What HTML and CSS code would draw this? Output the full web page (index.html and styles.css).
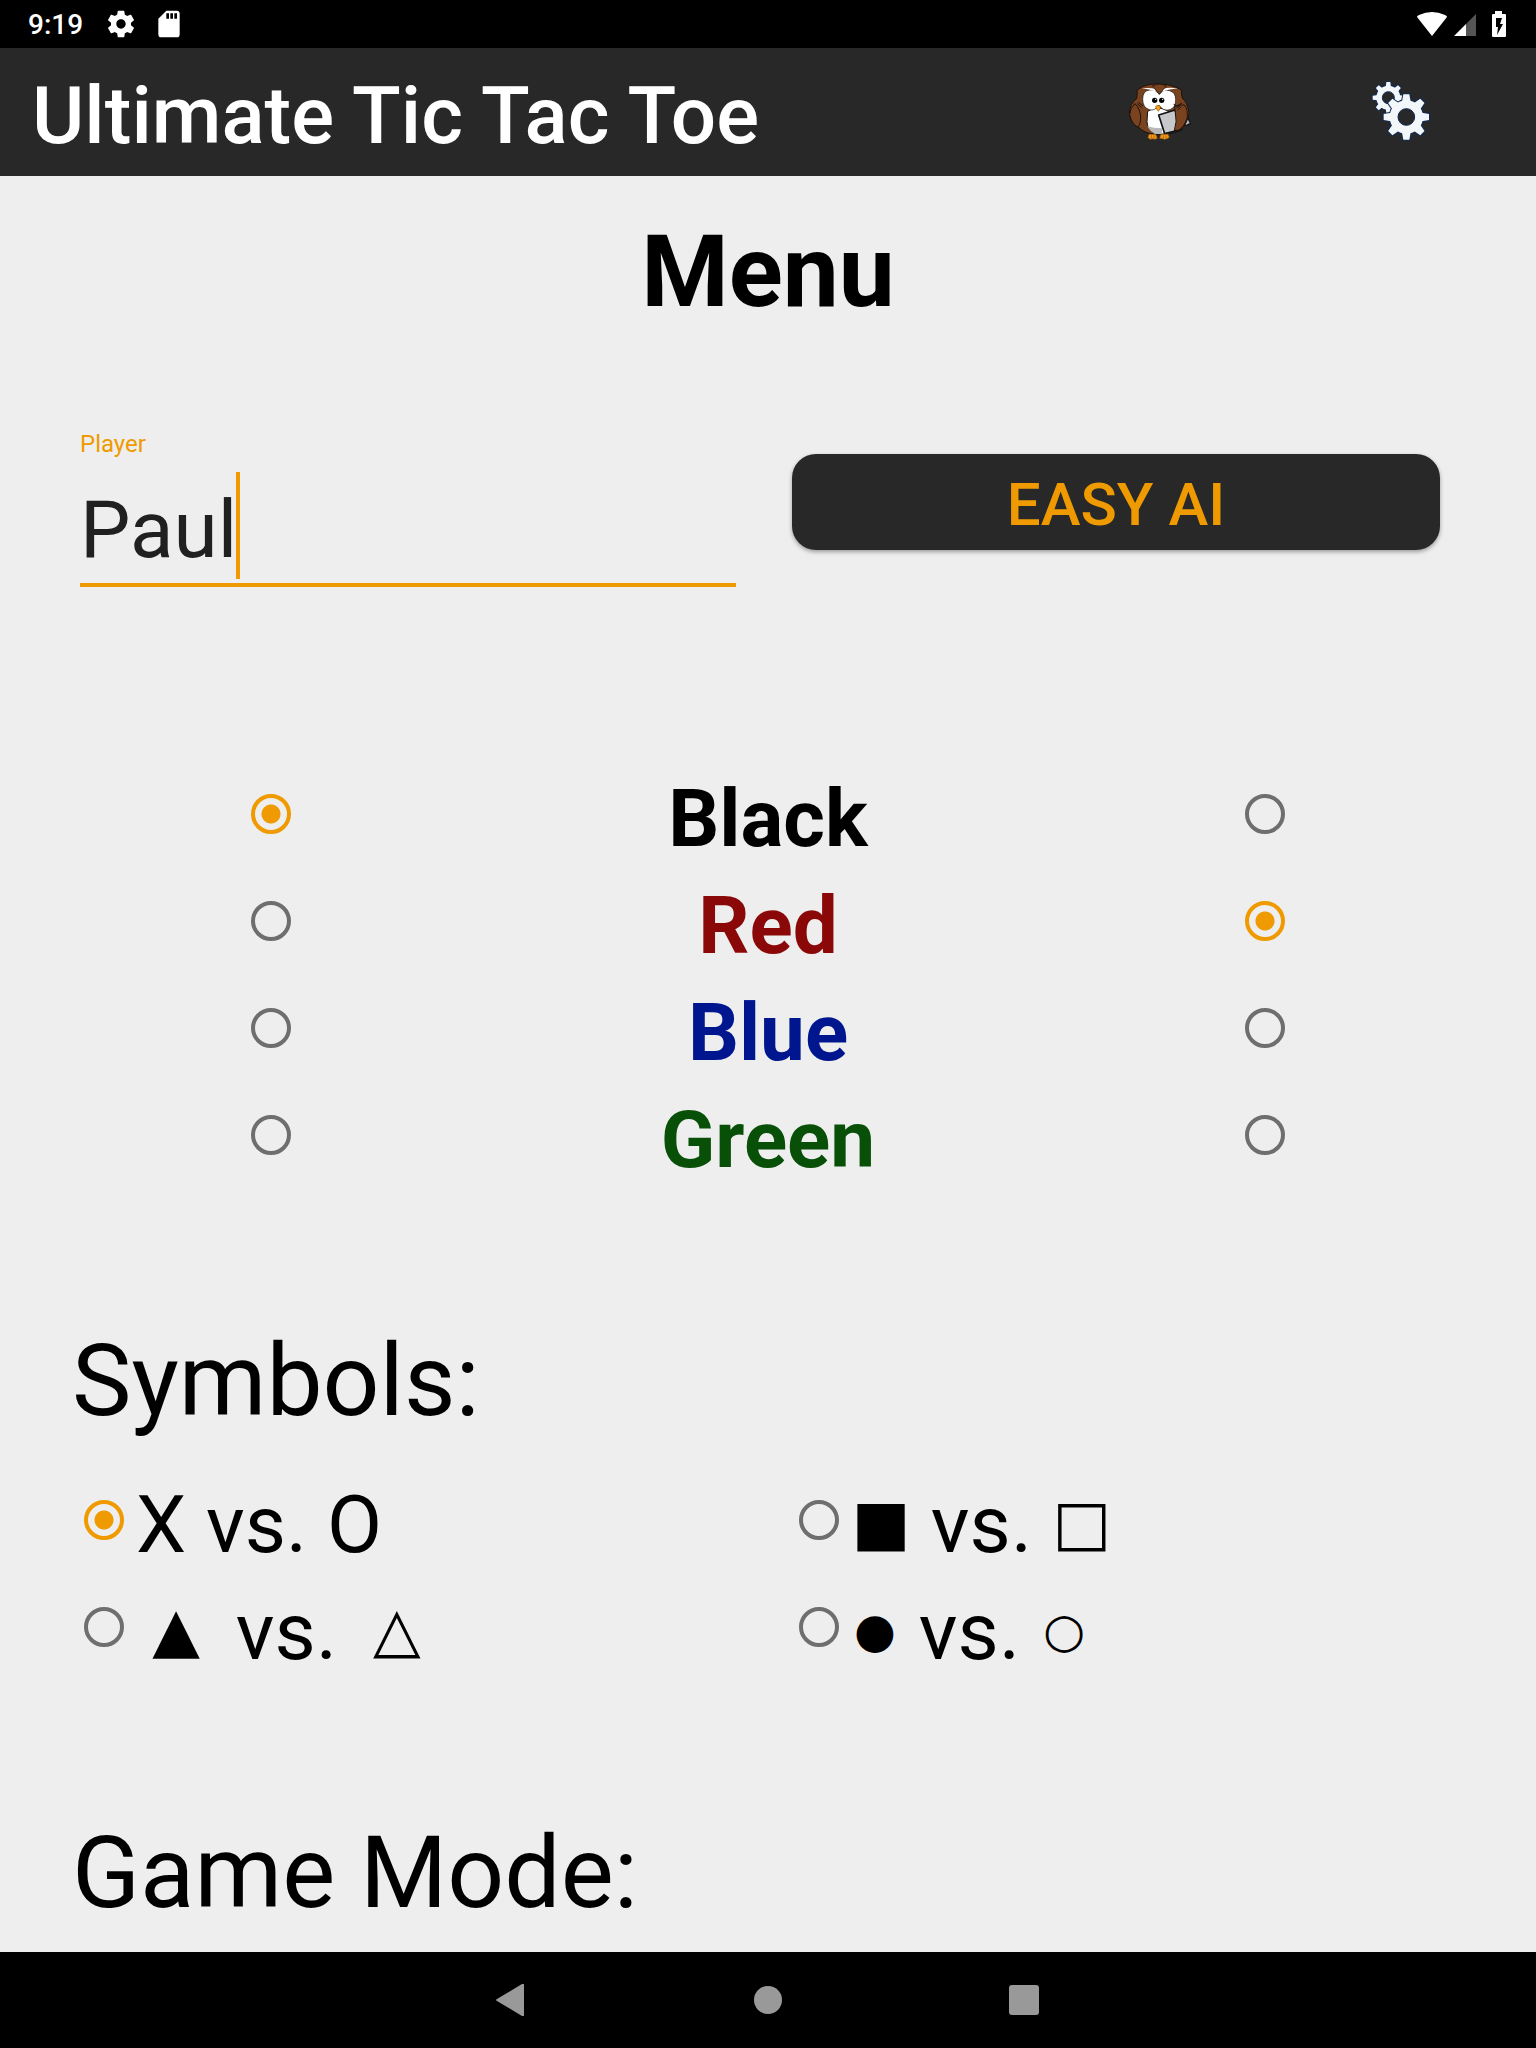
FILE: index.html
```html
<!DOCTYPE html>
<html lang="en">
<head>
<meta charset="utf-8">
<meta name="viewport" content="width=device-width, initial-scale=1">
<title>Ultimate Tic Tac Toe</title>
<link rel="stylesheet" href="styles.css">
</head>
<body>
<div class="status-bar">
  <div class="status-group">
    <time class="clock">9:19</time>
    <svg class="status-icon" viewBox="0 0 24 24" aria-hidden="true"><path fill="#fff" d="M19.43 12.98c.04-.32.07-.64.07-.98s-.03-.66-.07-.98l2.11-1.65c.19-.15.24-.42.12-.64l-2-3.46c-.12-.22-.39-.3-.61-.22l-2.49 1c-.52-.4-1.08-.73-1.69-.98l-.38-2.65C14.46 2.18 14.25 2 14 2h-4c-.25 0-.46.18-.49.42l-.38 2.65c-.61.25-1.17.59-1.69.98l-2.49-1c-.23-.09-.49 0-.61.22l-2 3.46c-.13.22-.07.49.12.64l2.11 1.65c-.04.32-.07.65-.07.98s.03.66.07.98l-2.11 1.65c-.19.15-.24.42-.12.64l2 3.46c.12.22.39.3.61.22l2.49-1c.52.4 1.08.73 1.69.98l.38 2.65c.03.24.24.42.49.42h4c.25 0 .46-.18.49-.42l.38-2.65c.61-.25 1.17-.59 1.69-.98l2.49 1c.23.09.49 0 .61-.22l2-3.46c.12-.22.07-.49-.12-.64l-2.11-1.65zM12 15.5c-1.93 0-3.5-1.57-3.5-3.5s1.57-3.5 3.5-3.5 3.5 1.57 3.5 3.5-1.57 3.5-3.5 3.5z"/></svg>
    <svg class="status-icon" viewBox="0 0 24 24" aria-hidden="true"><path fill="#fff" d="M18 2h-8L4 8v12c0 1.100.9 2 2 2h12c1.100 0 2-.9 2-2V4c0-1.100-.9-2-2-2zm-6 6h-2V4h2v4zm3 0h-2V4h2v4zm3 0h-2V4h2v4z"/></svg>
  </div>
  <svg class="signals" viewBox="0 0 92 28" aria-hidden="true">
    <path fill="#fff" d="M16 26 1 7Q1 6 3 5Q16-1 29 5Q31 6 31 7Z"/>
    <path fill="#fff" d="M38 26 50 14V26Z"/>
    <path fill="#555" d="M50 14 60 4V26H50Z"/>
    <path fill="#fff" d="M79 1h7v3h3q1 0 1 1v21q0 1-1 1H77q-1 0-1-1V5q0-1 1-1h2Z"/>
    <path fill="#000" d="M80 8h6l-2 6h3l-6 11 1-8h-2Z"/>
  </svg>
</div>
<header class="app-bar">
  <h1 class="app-title">Ultimate Tic Tac Toe</h1>
  <div class="app-actions">
    <button class="icon-button" type="button" aria-label="Computer opponent">
      <svg viewBox="50 45 192 192" aria-hidden="true">
        <path fill="#15171a" d="M231 145 242 178 232 183 218 180Z"/>
        <path fill="#b9bcbf" d="M230 160 238 174 228 179 222 176Z"/>
        <g stroke="#1b120d" stroke-width="3" stroke-linejoin="round">
          <path fill="#7a4320" d="M80 75Q96 62 120 58Q145 54 171 59Q193 63 214 75Q212 88 216 99Q231 113 236 142Q232 174 213 194Q196 206 163 207H130Q101 204 85 187Q60 174 57 145Q59 114 79 101Q82 88 80 75Z"/>
          <path fill="#fff" d="M112 139Q142 118 176 140V207H135Q111 197 110 170Z"/>
          <path fill="#7a4320" d="M74 116Q91 132 91 160Q91 177 83 187Q62 175 58 148Q59 129 74 116Z"/>
          <path fill="#fff" stroke-width="2" d="M97 102Q97 78 117 75Q135 72 147 88Q159 71 178 77Q196 82 196 104Q196 128 179 134Q158 140 146 120Q134 139 117 134Q97 128 97 102Z"/>
        </g>
        <path fill="#b9b9b9" d="M111 184Q129 190 155 190V207H134Q117 198 111 184Z"/>
        <path fill="#fff" d="M94 70Q120 67 132 71L139 80Q116 72 94 70ZM203 70Q173 66 160 71L153 80Q178 72 203 70Z"/>
        <path fill="#7a4320" stroke="#1b120d" stroke-width="2" d="M126 62Q147 53 168 62L147 88Z"/>
        <circle cx="133" cy="106" r="8" fill="#050505"/><circle cx="154" cy="106" r="8" fill="#050505"/>
        <circle cx="136" cy="103" r="2" fill="#fff"/><circle cx="157" cy="103" r="2" fill="#fff"/>
        <path fill="#f5a21c" stroke="#9b590a" stroke-width="2" d="M136 124Q143 118 150 124Q151 131 144 139Q136 132 136 124Z"/>
        <path fill="#c6c8c9" stroke="#0f1215" stroke-width="5" stroke-linejoin="round" d="M145 150 194 135 214 194 163 206Z"/>
        <path fill="#7a4320" stroke="#1b120d" stroke-width="3" stroke-linejoin="round" d="M193 124Q211 118 222 120Q234 133 230 161Q224 182 207 195L192 197Q201 169 195 143Z"/>
        <path fill="none" stroke="#1b120d" stroke-width="3" d="M190 118 200 123 215 114M198 129 209 123M202 136 212 125M81 116 94 128M84 112 98 123"/>
        <path fill="#f39a18" stroke="#9b590a" stroke-width="2" d="M116 208h20l5 12-8 3-6-2-7 2-7-5ZM152 208h21l4 9-7 4-7 2-7-2-8-1Z"/>
        <path stroke="#9b590a" stroke-width="2" d="M123 211v9M131 211v9M159 211v9M167 211v9"/>
      </svg>
    </button>
    <button class="icon-button" type="button" aria-label="Settings">
      <svg viewBox="57 45 192 192" aria-hidden="true">
        <defs>
          <g id="small-gear">
            <circle r="36"/>
            <g id="small-pair"><path d="M-8-30-6-47H6L8-30ZM-8 30-6 47H6L8 30Z"/></g>
            <use href="#small-pair" transform="rotate(45)"/>
            <use href="#small-pair" transform="rotate(90)"/>
            <use href="#small-pair" transform="rotate(135)"/>
          </g>
          <g id="large-gear">
            <circle r="50"/>
            <g id="large-pair"><path d="M-13-46-9-68H9L13-46ZM-13 46-9 68H9L13 46Z"/></g>
            <use href="#large-pair" transform="rotate(45)"/>
            <use href="#large-pair" transform="rotate(90)"/>
            <use href="#large-pair" transform="rotate(135)"/>
          </g>
        </defs>
        <g transform="translate(115 98)">
          <use href="#small-gear" fill="#102c56" stroke="#102c56" stroke-width="5"/>
          <use href="#small-gear" fill="#f4f7fa"/>
          <circle r="18" fill="#282828" stroke="#102c56" stroke-width="3"/>
        </g>
        <g transform="translate(169 156)">
          <use href="#large-gear" fill="#102c56" stroke="#102c56" stroke-width="6"/>
          <use href="#large-gear" fill="#f4f7fa"/>
          <circle r="25" fill="#282828" stroke="#102c56" stroke-width="3"/>
        </g>
      </svg>
    </button>
  </div>
</header>
<main class="menu">
  <h2 class="heading heading-center">Menu</h2>
  <form>
    <div class="players">
      <div class="field">
        <label class="field-label" for="player">Player</label>
        <input class="field-input" id="player" type="text" value="Paul" autocomplete="off" spellcheck="false">
        <span class="caret"></span>
      </div>
      <button class="opponent" type="button">EASY AI</button>
    </div>

    <div class="colors">
      <input class="radio" type="radio" name="color1" aria-label="Player: Black" checked>
      <span class="color-name black">Black</span>
      <input class="radio" type="radio" name="color2" aria-label="Opponent: Black">
      <input class="radio" type="radio" name="color1" aria-label="Player: Red">
      <span class="color-name red">Red</span>
      <input class="radio" type="radio" name="color2" aria-label="Opponent: Red" checked>
      <input class="radio" type="radio" name="color1" aria-label="Player: Blue">
      <span class="color-name blue">Blue</span>
      <input class="radio" type="radio" name="color2" aria-label="Opponent: Blue">
      <input class="radio" type="radio" name="color1" aria-label="Player: Green">
      <span class="color-name green">Green</span>
      <input class="radio" type="radio" name="color2" aria-label="Opponent: Green">
    </div>

    <h2 class="heading">Symbols:</h2>
    <div class="symbols">
      <label class="option"><input class="radio" type="radio" name="symbols" checked><span class="option-text">X vs. O</span></label>
      <label class="option"><input class="radio" type="radio" name="symbols"><span class="option-text"><span class="glyph square">■</span> vs. <span class="glyph square">□</span></span></label>
      <label class="option"><input class="radio" type="radio" name="symbols"><span class="option-text"><span class="glyph triangle">▲</span> vs. <span class="glyph triangle">△</span></span></label>
      <label class="option"><input class="radio" type="radio" name="symbols"><span class="option-text"><span class="glyph circle">●</span> vs. <span class="glyph circle">○</span></span></label>
    </div>

    <h2 class="heading">Game Mode:</h2>
  </form>
</main>
<nav class="nav-bar" aria-label="System">
  <button class="nav-button" type="button" aria-label="Back"><svg viewBox="0 0 32 32" aria-hidden="true"><path d="M26 0q2-1 2 1v30q0 2-2 1L1 17q-2-1 0-2Z"/></svg></button>
  <button class="nav-button" type="button" aria-label="Home"><svg viewBox="0 0 32 32" aria-hidden="true"><circle cx="16" cy="16" r="14"/></svg></button>
  <button class="nav-button" type="button" aria-label="Recent apps"><svg viewBox="0 0 32 32" aria-hidden="true"><rect x="1" y="1" width="30" height="30" rx="3"/></svg></button>
</nav>
</body>
</html>
```
FILE: styles.css
```css
* {
  box-sizing: border-box;
}

body {
  margin: 0;
  min-height: 100vh;
  display: flex;
  flex-direction: column;
  background: #eee;
  color: #000;
  font-family: Roboto, "Liberation Sans", sans-serif;
}

button {
  border: 0;
  padding: 0;
  background: none;
  font: inherit;
  cursor: pointer;
}

svg {
  display: block;
}

.status-bar {
  height: 48px;
  padding: 0 28px;
  display: flex;
  align-items: center;
  justify-content: space-between;
  background: #000;
  color: #fff;
}

.status-group {
  display: flex;
  align-items: center;
  gap: 16px;
}

.clock {
  margin-right: 6px;
  padding-top: 2px;
  font-size: 28px;
  line-height: 32px;
  font-weight: 500;
}

.status-icon {
  width: 32px;
  height: 32px;
}

.signals {
  width: 92px;
  height: 28px;
}

.app-bar {
  min-height: 128px;
  padding: 0 103px 0 32px;
  display: flex;
  align-items: center;
  justify-content: space-between;
  background: #282828;
  color: #fff;
}

.app-title {
  margin: 0;
  padding-top: 8px;
  font-size: 80px;
  line-height: 94px;
  font-weight: 500;
}

.app-actions {
  display: flex;
  gap: 178px;
}

.icon-button,
.icon-button svg {
  width: 64px;
  height: 64px;
}

.menu {
  flex: 1;
  padding-top: 29px;
}

.heading {
  margin: 126px 72px 19px;
  font-size: 100px;
  line-height: 133px;
  font-weight: 400;
}

.heading:last-child {
  margin-bottom: 0;
}

.heading-center {
  margin: 0 0 92px;
  font-weight: 700;
  text-align: center;
}

.players {
  display: grid;
  grid-template-columns: 82fr 81fr;
  gap: 56px;
  align-items: start;
  padding: 0 96px 0 80px;
}

.field {
  position: relative;
  display: flex;
  flex-direction: column;
}

.field-label {
  font-size: 24px;
  line-height: 28px;
  color: #ee9a00;
}

.field-input {
  width: 100%;
  height: 129px;
  padding: 18px 0 0;
  border: 0;
  border-bottom: 4px solid #ee9a00;
  border-radius: 0;
  outline: 0;
  background: none;
  color: #202020;
  caret-color: #ee9a00;
  font-family: inherit;
  font-size: 80px;
  line-height: 107px;
}

.caret {
  position: absolute;
  left: 156px;
  bottom: 8px;
  width: 4px;
  height: 107px;
  background: #ee9a00;
}

.opponent {
  height: 96px;
  margin-top: 24px;
  padding-top: 6px;
  border-radius: 24px;
  background: #282828;
  box-shadow: 0 2px 4px rgba(0, 0, 0, 0.35);
  color: #ee9a00;
  font-size: 60px;
  line-height: 80px;
  font-weight: 500;
}

.colors {
  display: grid;
  grid-template-columns: repeat(3, 1fr);
  place-items: center;
  margin-top: 173px;
  padding: 0 23px;
}

.color-name,
.option-text {
  padding-top: 12px;
  font-size: 80px;
  line-height: 95px;
}

.color-name {
  font-weight: 700;
}

.black { color: #000; }
.red { color: #8b0808; }
.blue { color: #00168f; }
.green { color: #084f08; }

.radio {
  appearance: none;
  flex: none;
  width: 40px;
  height: 40px;
  margin: 0;
  border: 4px solid #6e6e6e;
  border-radius: 50%;
}

.radio:checked {
  border-color: #ee9a00;
  background: radial-gradient(circle, #ee9a00 0 9px, transparent 10px);
}

.symbols {
  display: grid;
  grid-template-columns: 1fr 1fr;
  padding: 0 34px 0 72px;
}

.option {
  display: flex;
  align-items: center;
  height: 107px;
}

.option .radio {
  margin: 0 12px;
}

.option-text {
  white-space: nowrap;
}

.glyph {
  display: inline-block;
  text-align: center;
  font-family: "DejaVu Sans", sans-serif;
  line-height: 64px;
  vertical-align: 8px;
}

.square {
  width: 60px;
  font-size: 62px;
}

.triangle {
  width: 80px;
  font-size: 62px;
}

.circle {
  width: 48px;
  font-size: 48px;
  vertical-align: 12px;
}

.nav-bar {
  height: 96px;
  display: flex;
  justify-content: center;
  background: #000;
}

.nav-button {
  flex: 0 1 256px;
  display: grid;
  place-items: center;
}

.nav-button svg {
  width: 32px;
  height: 32px;
  fill: #999;
}
```
